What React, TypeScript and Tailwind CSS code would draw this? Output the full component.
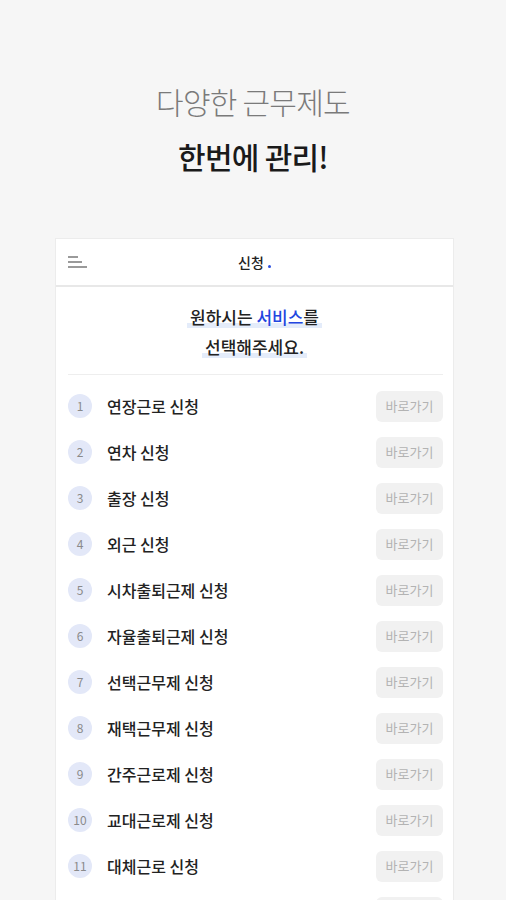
const items = [
  '연장근로 신청',
  '연차 신청',
  '출장 신청',
  '외근 신청',
  '시차출퇴근제 신청',
  '자율출퇴근제 신청',
  '선택근무제 신청',
  '재택근무제 신청',
  '간주근로제 신청',
  '교대근로제 신청',
  '대체근로 신청',
  '휴일근로 신청',
]

const font = { fontFamily: '"Noto Sans CJK KR", "Noto Sans", sans-serif' }

export default function App() {
  return (
    <div className="h-[900px] overflow-hidden bg-[#f6f6f6]" style={font}>
      {/* 상단 타이틀 */}
      <div className="flex flex-col items-center pt-[79px]">
        <h1 className="text-[30px] leading-[44px] font-light tracking-tight text-[#7a7a7a]">다양한 근무제도</h1>
        <h2 className="mt-[11px] text-[30px] leading-[44px] font-medium tracking-tight text-[#1a1a1a]">한번에 관리!</h2>
      </div>

      {/* 카드 */}
      <div className="ml-[55px] mt-[60px] w-[399px] border border-[#ececec] bg-white">
        <div className="relative flex h-[48px] items-center justify-center border-b-2 border-[#e8e8e8]">
          <div className="absolute left-[12px] top-[17px] flex flex-col gap-[3px]">
            <span className="h-[2px] w-[10px] bg-[#9a9a9a]" />
            <span className="h-[2px] w-[14px] bg-[#9a9a9a]" />
            <span className="h-[2px] w-[19px] bg-[#9a9a9a]" />
          </div>
          <span className="text-[14px] font-medium text-[#222]">신청</span>
          <span className="ml-[4px] mt-[8px] h-[3px] w-[3px] rounded-full bg-[#2a4fe0]" />
        </div>

        <div className="flex flex-col items-center pt-[15px] pb-[12px] text-[17px] leading-[30px] font-medium text-[#222]">
          <p className="bg-[linear-gradient(transparent_70%,#e4ecfa_70%,#e4ecfa_88%,transparent_88%)] px-[3px]">
            원하시는 <span className="text-[#2346e0]">서비스</span>를
          </p>
          <p className="bg-[linear-gradient(transparent_70%,#e4ecfa_70%,#e4ecfa_88%,transparent_88%)] px-[3px]">
            선택해주세요.
          </p>
        </div>

        <div className="ml-[12px] mr-[10px] border-t border-[#eeeeee]" />

        <ul className="pl-[12px] pr-[10px] pt-[8px]">
          {items.map((name, i) => (
            <li key={name} className="flex h-[46px] items-center">
              <span className="flex h-[24px] w-[24px] items-center justify-center rounded-full bg-[#e3e8f8] text-[12px] text-[#8a8a8a]">
                {i + 1}
              </span>
              <span className="ml-[15px] flex-1 text-[16px] font-medium text-[#222]">{name}</span>
              <button className="h-[31px] w-[67px] rounded-md bg-[#f1f1f1] text-[13px] text-[#b3b3b3]">바로가기</button>
            </li>
          ))}
        </ul>
      </div>
    </div>
  )
}
